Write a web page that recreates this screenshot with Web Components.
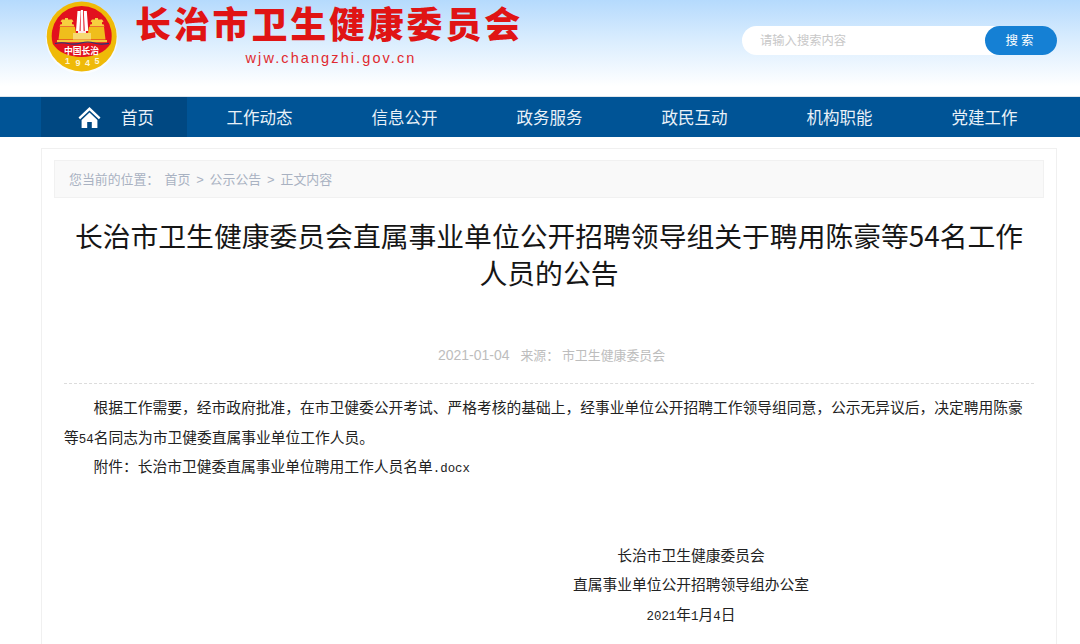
<!DOCTYPE html>
<html lang="zh-CN">
<head>
<meta charset="utf-8">
<title>长治市卫生健康委员会</title>
<style>
    html, body { margin: 0; padding: 0; background: #fff; }
    body {
        height: 644px;
        overflow: hidden;
        font-family: "Liberation Sans", "Noto Sans CJK SC", sans-serif;
    }
</style>
</head>
<body>
<site-header></site-header>
<site-nav></site-nav>
<article-card>
    <bread-crumb></bread-crumb>
    <article-head></article-head>
    <article-body></article-body>
</article-card>

<script>
class SiteHeader extends HTMLElement {
    constructor() {
        super();
        this.attachShadow({ mode: 'open' });
        this.shadowRoot.innerHTML = `
            <style>
                :host {
                    display: flex;
                    height: 96px;
                    box-sizing: border-box;
                    padding-left: 45px;
                    background: linear-gradient(#b5dafd 0%, #d8ecfe 40%, #ffffff 90%);
                }
                svg { display: block; flex: none; }
                .names {
                    margin-left: 16px;
                    width: 390px;
                    text-align: center;
                }
                .cn {
                    font: 900 36px/40px "Liberation Sans", "Noto Sans CJK SC", sans-serif;
                    color: #e01414;
                    letter-spacing: 2.8px;
                    white-space: nowrap;
                    margin-top: 6px;
                    text-align: left;
                }
                .en {
                    font: 14.5px/18px "Liberation Sans", sans-serif;
                    color: #e02a30;
                    letter-spacing: 2.1px;
                    margin-top: 3px;
                    margin-left: 2px;
                }
                .search {
                    margin-left: auto;
                    margin-right: 23px;
                    margin-top: 26px;
                    width: 315px;
                    height: 29px;
                    background: #fff;
                    border-radius: 15px;
                    display: flex;
                    align-items: center;
                    justify-content: space-between;
                    padding-left: 18px;
                    box-sizing: border-box;
                }
                .hint {
                    font: 12.3px "Noto Sans CJK SC", sans-serif;
                    color: #c8c8c8;
                    padding-bottom: 2px;
                }
                .btn {
                    width: 72px;
                    height: 29px;
                    border-radius: 15px;
                    background: #1580d4;
                    color: #fff;
                    font: 12.5px/27px "Noto Sans CJK SC", sans-serif;
                    letter-spacing: 3px;
                    text-align: center;
                }
            </style>
            <svg width="74" height="76" viewBox="0 0 74 76">
                <circle cx="36.7" cy="38" r="36" fill="#fff" opacity=".6"/>
                <circle cx="36.7" cy="36.5" r="35" fill="#efba08"/>
                <path d="M7.8 44A30 30 0 1 1 65.6 44C60 52 50 57 36.7 57S13 52 7.8 44Z" fill="#e2111e"/>
                <path d="M31 31l1.500-20h3l-1 20zM35.600 31l.2-21h2.200l.6 21zM39.800 31l-1-20h3l1.500 20z" fill="#fff"/>
                <path d="M33 31h8v3h-8z" fill="#fff" opacity=".9"/>
                <path d="M20 18h3v1.500h4l1.500 2-1.500 .7v2h1.500l1 2.300h-15l1-2.300h1.500v-2l-1.500-.7 1.500-2h3z" fill="#f7cf3f"/>
                <path d="M50 18h3v1.500h4l1.500 2-1.500 .7v2h1.500l1 2.300h-15l1-2.300h1.500v-2l-1.500-.7 1.500-2h3z" fill="#f7cf3f"/>
                <path d="M15 27h15l1 6h12l1-6h15l1.500 12.500H13.500z" fill="#efbe1c"/>
                <path d="M28 33h18v6.500H28z" fill="#f6da73"/>
                <path d="M12 40h50v2.200H12z" fill="#f4c83a"/>
                <path d="M10 43.500q7-1.500 13 0t13-.5 13 0 15 .3" fill="none" stroke="#24357a" stroke-width="1.200"/>
                <text x="36.500" y="54" text-anchor="middle" font-family="Noto Sans CJK SC, sans-serif" font-size="8.800" font-weight="700" fill="#fff">中国长治</text>
                <text x="20 30.500 40 49.500" y="64 66 66 64" font-family="Liberation Sans, sans-serif" font-size="9" font-weight="700" fill="#fff6d0">1945</text>
            </svg>
            <div class="names">
                <div class="cn">长治市卫生健康委员会</div>
                <div class="en">wjw.changzhi.gov.cn</div>
            </div>
            <div class="search">
                <span class="hint">请输入搜索内容</span>
                <span class="btn">搜索</span>
            </div>
        `;
    }
}

class SiteNav extends HTMLElement {
    constructor() {
        super();
        this.attachShadow({ mode: 'open' });
        const items = ['工作动态', '信息公开', '政务服务', '政民互动', '机构职能', '党建工作'];
        this.shadowRoot.innerHTML = `
            <style>
                :host {
                    display: flex;
                    height: 41px;
                    padding-left: 41px;
                    background: #005496;
                    border-top: 1px solid #dfe6ec;
                    box-sizing: border-box;
                    color: #fff;
                    font: 16.5px/40px "Noto Sans CJK SC", sans-serif;
                }
                a {
                    display: block;
                    width: 145px;
                    text-align: center;
                    color: #e9f1f8;
                    white-space: nowrap;
                }
                .home {
                    width: 146px;
                    background: #004882;
                    display: flex;
                    align-items: center;
                    box-sizing: border-box;
                    padding-left: 37px;
                    gap: 20px;
                }
            </style>
            <a class="home">
                <svg width="23" height="23" viewBox="0 0 23 23">
                    <path d="M11.500 1L0.500 11.500l1.600 1.800L11.500 4.600l9.400 8.700 1.600-1.800z" fill="#fff"/>
                    <path d="M11.500 6.600L3.600 14v8h5.600v-6h4.600v6h5.600v-8z" fill="#fff"/>
                </svg>
                <span>首页</span>
            </a>
            ${items.map((t) => `<a>${t}</a>`).join('')}
        `;
    }
}

class ArticleCard extends HTMLElement {
    constructor() {
        super();
        this.attachShadow({ mode: 'open' });
        this.shadowRoot.innerHTML = `
            <style>
                :host {
                    display: block;
                    width: 1016px;
                    box-sizing: border-box;
                    margin: 11px 0 0 41px;
                    padding: 11px 12px 0;
                    border: 1px solid #f0f0f0;
                    height: 520px;
                    background: #fff;
                }
            </style>
            <slot></slot>
        `;
    }
}

class BreadCrumb extends HTMLElement {
    constructor() {
        super();
        this.attachShadow({ mode: 'open' });
        this.shadowRoot.innerHTML = `
            <style>
                :host {
                    display: block;
                    height: 38px;
                    box-sizing: border-box;
                    padding-left: 14px;
                    background: #f9f9f9;
                    border: 1px solid #f1f1f1;
                    font: 12.9px/36px "Noto Sans CJK SC", sans-serif;
                    color: #a9b2c2;
                    white-space: nowrap;
                }
                .here { margin-right: 5.3px; }
                .sep { margin: 0 3px; font-family: "Liberation Sans", sans-serif; }
            </style>
            <span class="here">您当前的位置：</span>首页 <span class="sep">&gt;</span> 公示公告 <span class="sep">&gt;</span> 正文内容
        `;
    }
}

class ArticleHead extends HTMLElement {
    constructor() {
        super();
        this.attachShadow({ mode: 'open' });
        this.shadowRoot.innerHTML = `
            <style>
                :host {
                    display: block;
                    padding: 19px 0 0;
                    text-align: center;
                }
                h1 {
                    margin: 0;
                    padding: 0 15px;
                    font: 400 27.8px/37px "Noto Sans CJK SC", sans-serif;
                    color: #161616;
                }
                .meta {
                    margin: 52px 10px 0;
                    padding-left: 5px;
                    height: 41px;
                    box-sizing: border-box;
                    font: 12.9px/24px "Noto Sans CJK SC", sans-serif;
                    color: #bdbdbd;
                    border-bottom: 1px dashed #dcdcdc;
                }
                .date { font-family: "Liberation Sans", sans-serif; font-size: 14px; margin-right: 8px; }
            </style>
            <h1>长治市卫生健康委员会直属事业单位公开招聘领导组关于聘用陈豪等54名工作人员的公告</h1>
            <div class="meta"><span class="date">2021-01-04</span> 来源： 市卫生健康委员会</div>
        `;
    }
}

class ArticleBody extends HTMLElement {
    constructor() {
        super();
        this.attachShadow({ mode: 'open' });
        this.shadowRoot.innerHTML = `
            <style>
                :host {
                    display: block;
                    margin: 8px 10px 0;
                    font: 14.76px/29.6px "Noto Sans CJK SC", sans-serif;
                    color: #222;
                }
                p { margin: 0; text-indent: 2em; }
                .blank { height: 59px; }
                .sign {
                    margin-left: 509px;
                    width: 236px;
                    text-align: center;
                }
                .mono { font-family: "Liberation Mono", monospace; font-size: 12.4px; line-height: 0; }
            </style>
            <p>根据工作需要，经市政府批准，在市卫健委公开考试、严格考核的基础上，经事业单位公开招聘工作领导组同意，公示无异议后，决定聘用陈豪等<span class="mono">54</span>名同志为市卫健委直属事业单位工作人员。</p>
            <p>附件：长治市卫健委直属事业单位聘用工作人员名单<span class="mono">.docx</span></p>
            <div class="blank"></div>
            <div class="sign">
                <div>长治市卫生健康委员会</div>
                <div>直属事业单位公开招聘领导组办公室</div>
                <div><span class="mono">2021</span>年<span class="mono">1</span>月<span class="mono">4</span>日</div>
            </div>
        `;
    }
}

customElements.define('site-header', SiteHeader);
customElements.define('site-nav', SiteNav);
customElements.define('article-card', ArticleCard);
customElements.define('bread-crumb', BreadCrumb);
customElements.define('article-head', ArticleHead);
customElements.define('article-body', ArticleBody);
</script>
</body>
</html>
